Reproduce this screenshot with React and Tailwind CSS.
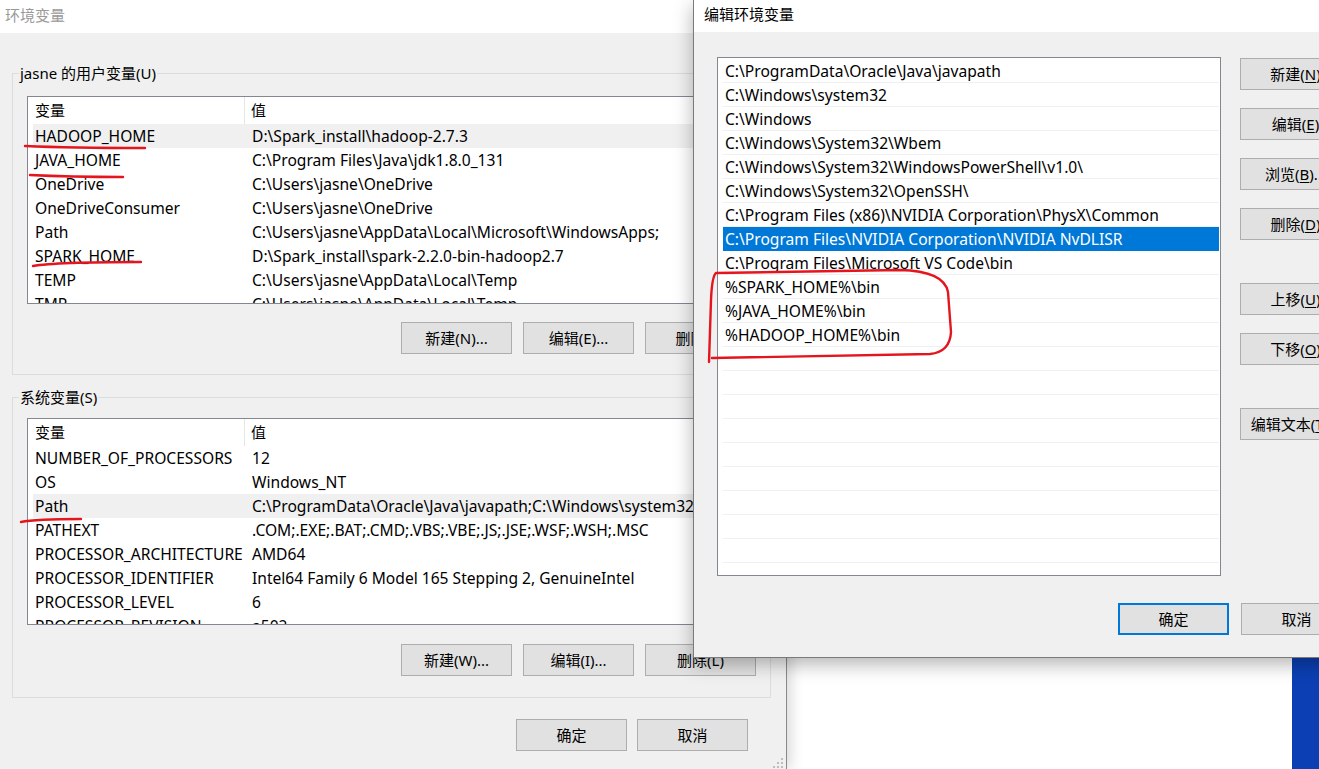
import React from "react";

const FONT = { fontFamily: '"Noto Sans", "Noto Sans CJK SC", sans-serif' };

const userVars = [
  ["HADOOP_HOME", "D:\\Spark_install\\hadoop-2.7.3", true],
  ["JAVA_HOME", "C:\\Program Files\\Java\\jdk1.8.0_131"],
  ["OneDrive", "C:\\Users\\jasne\\OneDrive"],
  ["OneDriveConsumer", "C:\\Users\\jasne\\OneDrive"],
  ["Path", "C:\\Users\\jasne\\AppData\\Local\\Microsoft\\WindowsApps;"],
  ["SPARK_HOME", "D:\\Spark_install\\spark-2.2.0-bin-hadoop2.7"],
  ["TEMP", "C:\\Users\\jasne\\AppData\\Local\\Temp"],
  ["TMP", "C:\\Users\\jasne\\AppData\\Local\\Temp"],
];

const sysVars = [
  ["NUMBER_OF_PROCESSORS", "12"],
  ["OS", "Windows_NT"],
  ["Path", "C:\\ProgramData\\Oracle\\Java\\javapath;C:\\Windows\\system32;C:\\Windows;C:\\Windows\\System32\\Wbem", true],
  ["PATHEXT", ".COM;.EXE;.BAT;.CMD;.VBS;.VBE;.JS;.JSE;.WSF;.WSH;.MSC"],
  ["PROCESSOR_ARCHITECTURE", "AMD64"],
  ["PROCESSOR_IDENTIFIER", "Intel64 Family 6 Model 165 Stepping 2, GenuineIntel"],
  ["PROCESSOR_LEVEL", "6"],
  ["PROCESSOR_REVISION", "a502"],
];

const paths = [
  "C:\\ProgramData\\Oracle\\Java\\javapath",
  "C:\\Windows\\system32",
  "C:\\Windows",
  "C:\\Windows\\System32\\Wbem",
  "C:\\Windows\\System32\\WindowsPowerShell\\v1.0\\",
  "C:\\Windows\\System32\\OpenSSH\\",
  "C:\\Program Files (x86)\\NVIDIA Corporation\\PhysX\\Common",
  "C:\\Program Files\\NVIDIA Corporation\\NVIDIA NvDLISR",
  "C:\\Program Files\\Microsoft VS Code\\bin",
  "%SPARK_HOME%\\bin",
  "%JAVA_HOME%\\bin",
  "%HADOOP_HOME%\\bin",
];

function Btn({ children, primary }) {
  return (
    <div
      className={
        "w-[111px] h-[32px] shrink-0 flex items-center justify-center bg-[#e1e1e1] text-[15px] text-black whitespace-nowrap " +
        (primary ? "border-2 border-[#0078d7]" : "border border-[#adadad]")
      }
    >
      {children}
    </div>
  );
}

function VarList({ rows, height }) {
  return (
    <div
      className="w-full min-w-0 border border-[#828790] bg-white overflow-hidden pl-[5px]"
      style={{ height }}
    >
      <div className="flex h-[27px] items-center text-[15px]">
        <div className="w-[212px] h-full flex items-center pl-[2px] border-r border-[#e5e5e5]">变量</div>
        <div className="pl-[6px]">值</div>
      </div>
      {rows.map(([k, v, sel]) => (
        <div
          key={k + v}
          className={
            "flex h-[24px] items-center pt-[2px] text-[15.6px] whitespace-nowrap " +
            (sel ? "bg-[#f0f0f0]" : "")
          }
        >
          <div className="w-[219px] pl-[2px] shrink-0">{k}</div>
          <div>{v}</div>
        </div>
      ))}
    </div>
  );
}

function Group({ title, rows, listH, listMt, btnMt, pb, buttons }) {
  return (
    <fieldset className="min-w-0 w-full border border-[#dcdcdc] m-0 p-0" style={{ paddingBottom: pb }}>
      <legend className="ml-[6px] px-[1px] text-[15px] leading-[20px]">{title}</legend>
      <div className="px-[14px] min-w-0" style={{ marginTop: listMt }}>
        <VarList rows={rows} height={listH} />
        <div className="flex justify-end gap-[11px]" style={{ marginTop: btnMt }}>
          {buttons.map((b) => (
            <Btn key={b}>{b}</Btn>
          ))}
        </div>
      </div>
    </fieldset>
  );
}

function LeftWindow() {
  return (
    <div className="absolute left-0 top-0 w-[787px] h-[769px] border-r border-[#8a8a8a] bg-[#f0f0f0] flex flex-col shadow-[4px_0_12px_rgba(0,0,0,0.15)]">
      <div className="h-[33px] shrink-0 bg-white pt-[5px] pl-[5px] text-[15px] leading-[20px] text-[#9a9a9a]">环境变量</div>
      <div className="pl-[12px] pr-[15px] flex flex-col min-w-0">
        <div className="mt-[30px] min-w-0">
          <Group
            title="jasne 的用户变量(U)"
            rows={userVars}
            listH={208}
            listMt={13}
            btnMt={18}
            pb={20}
            buttons={["新建(N)...", "编辑(E)...", "删除(D)"]}
          />
        </div>
        <div className="mt-[12px] min-w-0">
          <Group
            title="系统变量(S)"
            rows={sysVars}
            listH={207}
            listMt={11}
            btnMt={19}
            pb={21}
            buttons={["新建(W)...", "编辑(I)...", "删除(L)"]}
          />
        </div>
        <div className="flex justify-end gap-[10px] pr-[23px] mt-[21px]">
          <Btn>确定</Btn>
          <Btn>取消</Btn>
        </div>
      </div>
      <svg className="absolute right-[2px] bottom-0" width="12" height="12" viewBox="0 0 12 12">
        <rect x="9" y="1" width="2" height="2" fill="#bdbdbd" />
        <rect x="5" y="5" width="2" height="2" fill="#bdbdbd" />
        <rect x="9" y="5" width="2" height="2" fill="#bdbdbd" />
        <rect x="1" y="9" width="2" height="2" fill="#bdbdbd" />
        <rect x="5" y="9" width="2" height="2" fill="#bdbdbd" />
        <rect x="9" y="9" width="2" height="2" fill="#bdbdbd" />
      </svg>
    </div>
  );
}

function U({ children }) {
  return <span className="underline underline-offset-2">{children}</span>;
}

function EditDialog() {
  const empty = Array.from({ length: 12 });
  return (
    <div className="absolute left-[693px] top-0 w-[700px] h-[658px] border-l border-b border-[#7a7a7a] bg-[#f0f0f0] flex flex-col shadow-[0_6px_18px_rgba(0,0,0,0.3)]">
      <div className="h-[32px] shrink-0 bg-white pt-[4px] pl-[10px] text-[15px] leading-[20px] text-black">编辑环境变量</div>
      <div className="pl-[23px] pt-[25px] flex flex-col">
        <div className="flex gap-[19px]">
          <div className="w-[504px] h-[519px] shrink-0 border border-[#828790] bg-white overflow-hidden pl-[5px] pr-px pt-px">
            {paths.map((p, i) => (
              <div
                key={p}
                className={
                  "h-[24px] flex items-center pt-[2px] pl-[2px] text-[15.6px] whitespace-nowrap " +
                  (i === 7 ? "bg-[#0078d7] text-white" : "border-b border-[#f0f0f0]")
                }
              >
                {p}
              </div>
            ))}
            {empty.map((_, i) => (
              <div key={i} className="h-[24px] border-b border-[#f0f0f0]" />
            ))}
          </div>
          <div className="flex flex-col pt-px">
            <Btn>新建(<U>N</U>)</Btn>
            <div className="mt-[18px]"><Btn>编辑(<U>E</U>)</Btn></div>
            <div className="mt-[18px]"><Btn>浏览(<U>B</U>)...</Btn></div>
            <div className="mt-[18px]"><Btn>删除(<U>D</U>)</Btn></div>
            <div className="mt-[43px]"><Btn>上移(<U>U</U>)</Btn></div>
            <div className="mt-[18px]"><Btn>下移(<U>O</U>)</Btn></div>
            <div className="mt-[43px]"><Btn>编辑文本(<U>T</U>)...</Btn></div>
          </div>
        </div>
        <div className="flex gap-[12px] ml-[401px] mt-[27px]">
          <Btn primary>确定</Btn>
          <Btn>取消</Btn>
        </div>
      </div>
    </div>
  );
}

function Annotations() {
  const s = { stroke: "#e5151d", strokeWidth: 2.4, fill: "none", strokeLinecap: "round", strokeLinejoin: "round" };
  return (
    <svg className="absolute left-0 top-0 pointer-events-none" width="1319" height="769" viewBox="0 0 1319 769">
      <path d="M25 146 Q 70 148 145 148" {...s} />
      <path d="M30 175 Q 70 177 123 177" {...s} />
      <path d="M33 266 Q 55 262 141 262" {...s} />
      <path d="M21 522 Q 35 519 81 519" {...s} />
      <path d="M709 362 L711 300 Q712 276 716 273 L900 270 Q944 271 948 292 L951 332 Q950 352 930 354 L712 358" {...s} />
    </svg>
  );
}

export default function App() {
  return (
    <div className="relative w-[1319px] h-[769px] bg-white overflow-hidden text-black" style={FONT}>
      <div className="absolute left-[1292px] top-[657px] w-[27px] h-[112px] bg-[#0c3fb3]" />
      <LeftWindow />
      <EditDialog />
      <Annotations />
    </div>
  );
}
